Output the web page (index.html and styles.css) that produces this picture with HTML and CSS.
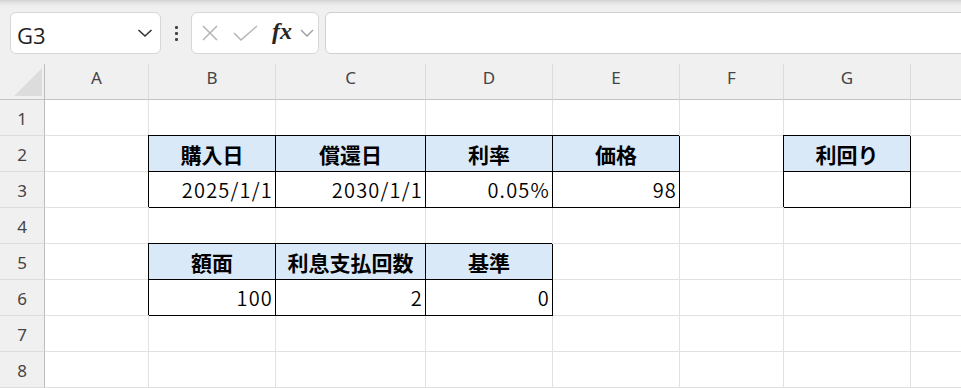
FILE: index.html
```html
<!DOCTYPE html>
<html lang="ja">
<head>
  <meta charset="UTF-8" />
  <meta name="viewport" content="width=device-width, initial-scale=1.0" />
  <title>利回り - Sheet1</title>
  <link rel="stylesheet" href="styles.css">
</head>
<body>
  <div class="toolbar">
    <div class="name-box">
      <span class="name-text">G3</span>
      <svg class="chev" width="16" height="10" viewBox="0 0 16 10"><path d="M1.5 2 L8 8 L14.5 2" fill="none" stroke="#333" stroke-width="1.6"/></svg>
    </div>
    <div class="dots"><span></span><span></span><span></span></div>
    <div class="fx-box">
      <svg class="ic-x" width="18" height="16" viewBox="0 0 18 16"><path d="M2 1 L16 15 M16 1 L2 15" stroke="#b4b4b4" stroke-width="1.5"/></svg>
      <svg class="ic-check" width="25" height="16" viewBox="0 0 25 16"><path d="M1 8 L8 15 L24 1" fill="none" stroke="#b4b4b4" stroke-width="1.5"/></svg>
      <span class="fx">fx</span>
      <svg class="ic-small" width="14" height="8" viewBox="0 0 14 8"><path d="M1 1 L7 7 L13 1" fill="none" stroke="#9a9a9a" stroke-width="1.3"/></svg>
    </div>
    <div class="formula-bar"></div>
  </div>

  <div id="sheet" class="sheet"></div>

  <script>
    const cols = ["A", "B", "C", "D", "E", "F", "G", "H"];
    const cellData = {
      B2: ["購入日", "head"], C2: ["償還日", "head"], D2: ["利率", "head"], E2: ["価格", "head"], G2: ["利回り", "head"],
      B3: ["2025/1/1", "num"], C3: ["2030/1/1", "num"], D3: ["0.05%", "num"], E3: ["98", "num"], G3: ["", "num"],
      B5: ["額面", "head"], C5: ["利息支払回数", "head"], D5: ["基準", "head"],
      B6: ["100", "num"], C6: ["2", "num"], D6: ["0", "num"]
    };

    const sheet = document.getElementById("sheet");

    const corner = document.createElement("div");
    corner.className = "corner";
    corner.innerHTML = "<div class='tri'></div>";
    sheet.appendChild(corner);

    cols.forEach(c => {
      const h = document.createElement("div");
      h.className = "col-head";
      h.textContent = c;
      sheet.appendChild(h);
    });

    for (let r = 1; r <= 8; r++) {
      const rh = document.createElement("div");
      rh.className = "row-head";
      rh.textContent = r;
      sheet.appendChild(rh);

      cols.forEach(c => {
        const cell = document.createElement("div");
        cell.className = "cell";
        const d = cellData[c + r];
        if (d) {
          cell.classList.add("tbl", d[1]);
          cell.textContent = d[0];
        }
        sheet.appendChild(cell);
      });
    }
  </script>
</body>
</html>
```

FILE: styles.css
```css
body {
  margin: 0;
  background: #f0f0f0;
  font-family: "Noto Sans CJK JP", "Noto Sans", sans-serif;
  overflow: hidden;
}
.toolbar {
  height: 64px;
  box-sizing: border-box;
  padding: 12px 0 0 10px;
  display: flex;
  align-items: flex-start;
  background: linear-gradient(#d2d2d2 0, #e6e6e6 3px, #eeeeee 6px, #f0f0f0 9px);
}
.name-box {
  width: 151px;
  height: 42px;
  box-sizing: border-box;
  background: white;
  border: 1px solid #d6d6d6;
  border-radius: 6px;
  display: flex;
  align-items: center;
  justify-content: space-between;
  padding: 0 7px 0 6px;
}
.name-text {
  font-family: "Open Sans", sans-serif;
  font-size: 22px;
  color: #1f1f1f;
  margin-top: 3px;
}
.dots {
  width: 30px;
  height: 42px;
  display: flex;
  flex-direction: column;
  align-items: center;
  justify-content: center;
  gap: 3px;
}
.dots span {
  width: 3px;
  height: 3px;
  background: #444;
  border-radius: 1px;
}
.fx-box {
  width: 128px;
  height: 42px;
  box-sizing: border-box;
  background: white;
  border: 1px solid #d6d6d6;
  border-radius: 6px;
  display: flex;
  align-items: center;
  padding-left: 9px;
}
.ic-x {
  margin-right: 14px;
}
.ic-check {
  margin-right: 14px;
}
.fx {
  font-family: "Liberation Serif", serif;
  font-style: italic;
  font-weight: bold;
  font-size: 24px;
  color: #262626;
  margin-right: 8px;
  margin-top: -3px;
}
.formula-bar {
  flex: 1;
  height: 42px;
  box-sizing: border-box;
  margin: 0 -10px 0 6px;
  background: white;
  border: 1px solid #d0d0d0;
  border-radius: 6px;
}
.sheet {
  display: grid;
  grid-template-columns: 45px 104px 127px 150px 127px 127px 104px 127px 127px;
  grid-auto-rows: 36px;
}
.sheet > div {
  box-sizing: border-box;
  display: flex;
  align-items: center;
}
.corner {
  background: #f0f0f0;
  border-right: 1px solid #bdbdbd;
  border-bottom: 1px solid #c4c4c4;
  justify-content: flex-end;
  align-items: flex-end !important;
  padding: 0 2px 3px 0;
}
.tri {
  width: 28px;
  height: 28px;
  background: #dcdcdc;
  clip-path: polygon(100% 0, 100% 100%, 0 100%);
}
.col-head {
  background: #f0f0f0;
  border-right: 1px solid #dcdcdc;
  border-bottom: 1px solid #c4c4c4;
  justify-content: center;
  padding-bottom: 8px;
  font-family: "Noto Sans", sans-serif;
  font-size: 17px;
  color: #444;
}
.row-head {
  background: #f0f0f0;
  border-right: 1px solid #bdbdbd;
  border-bottom: 1px solid #dcdcdc;
  justify-content: center;
  padding-top: 2px;
  font-family: "Noto Sans", sans-serif;
  font-size: 17px;
  color: #444;
}
.cell {
  background: white;
  border-right: 1px solid #e1e1e1;
  border-bottom: 1px solid #e1e1e1;
  font-size: 20px;
  color: #000;
  white-space: nowrap;
}
.tbl {
  border-right-color: #000;
  border-bottom-color: #000;
  box-shadow: -1px -1px 0 0 #000;
}
.head {
  background: #dae9f8;
  font-weight: bold;
  font-size: 21px;
  justify-content: center;
}
.num {
  justify-content: flex-end;
  padding-right: 2px;
  font-weight: 350;
  letter-spacing: 1.2px;
}
```
